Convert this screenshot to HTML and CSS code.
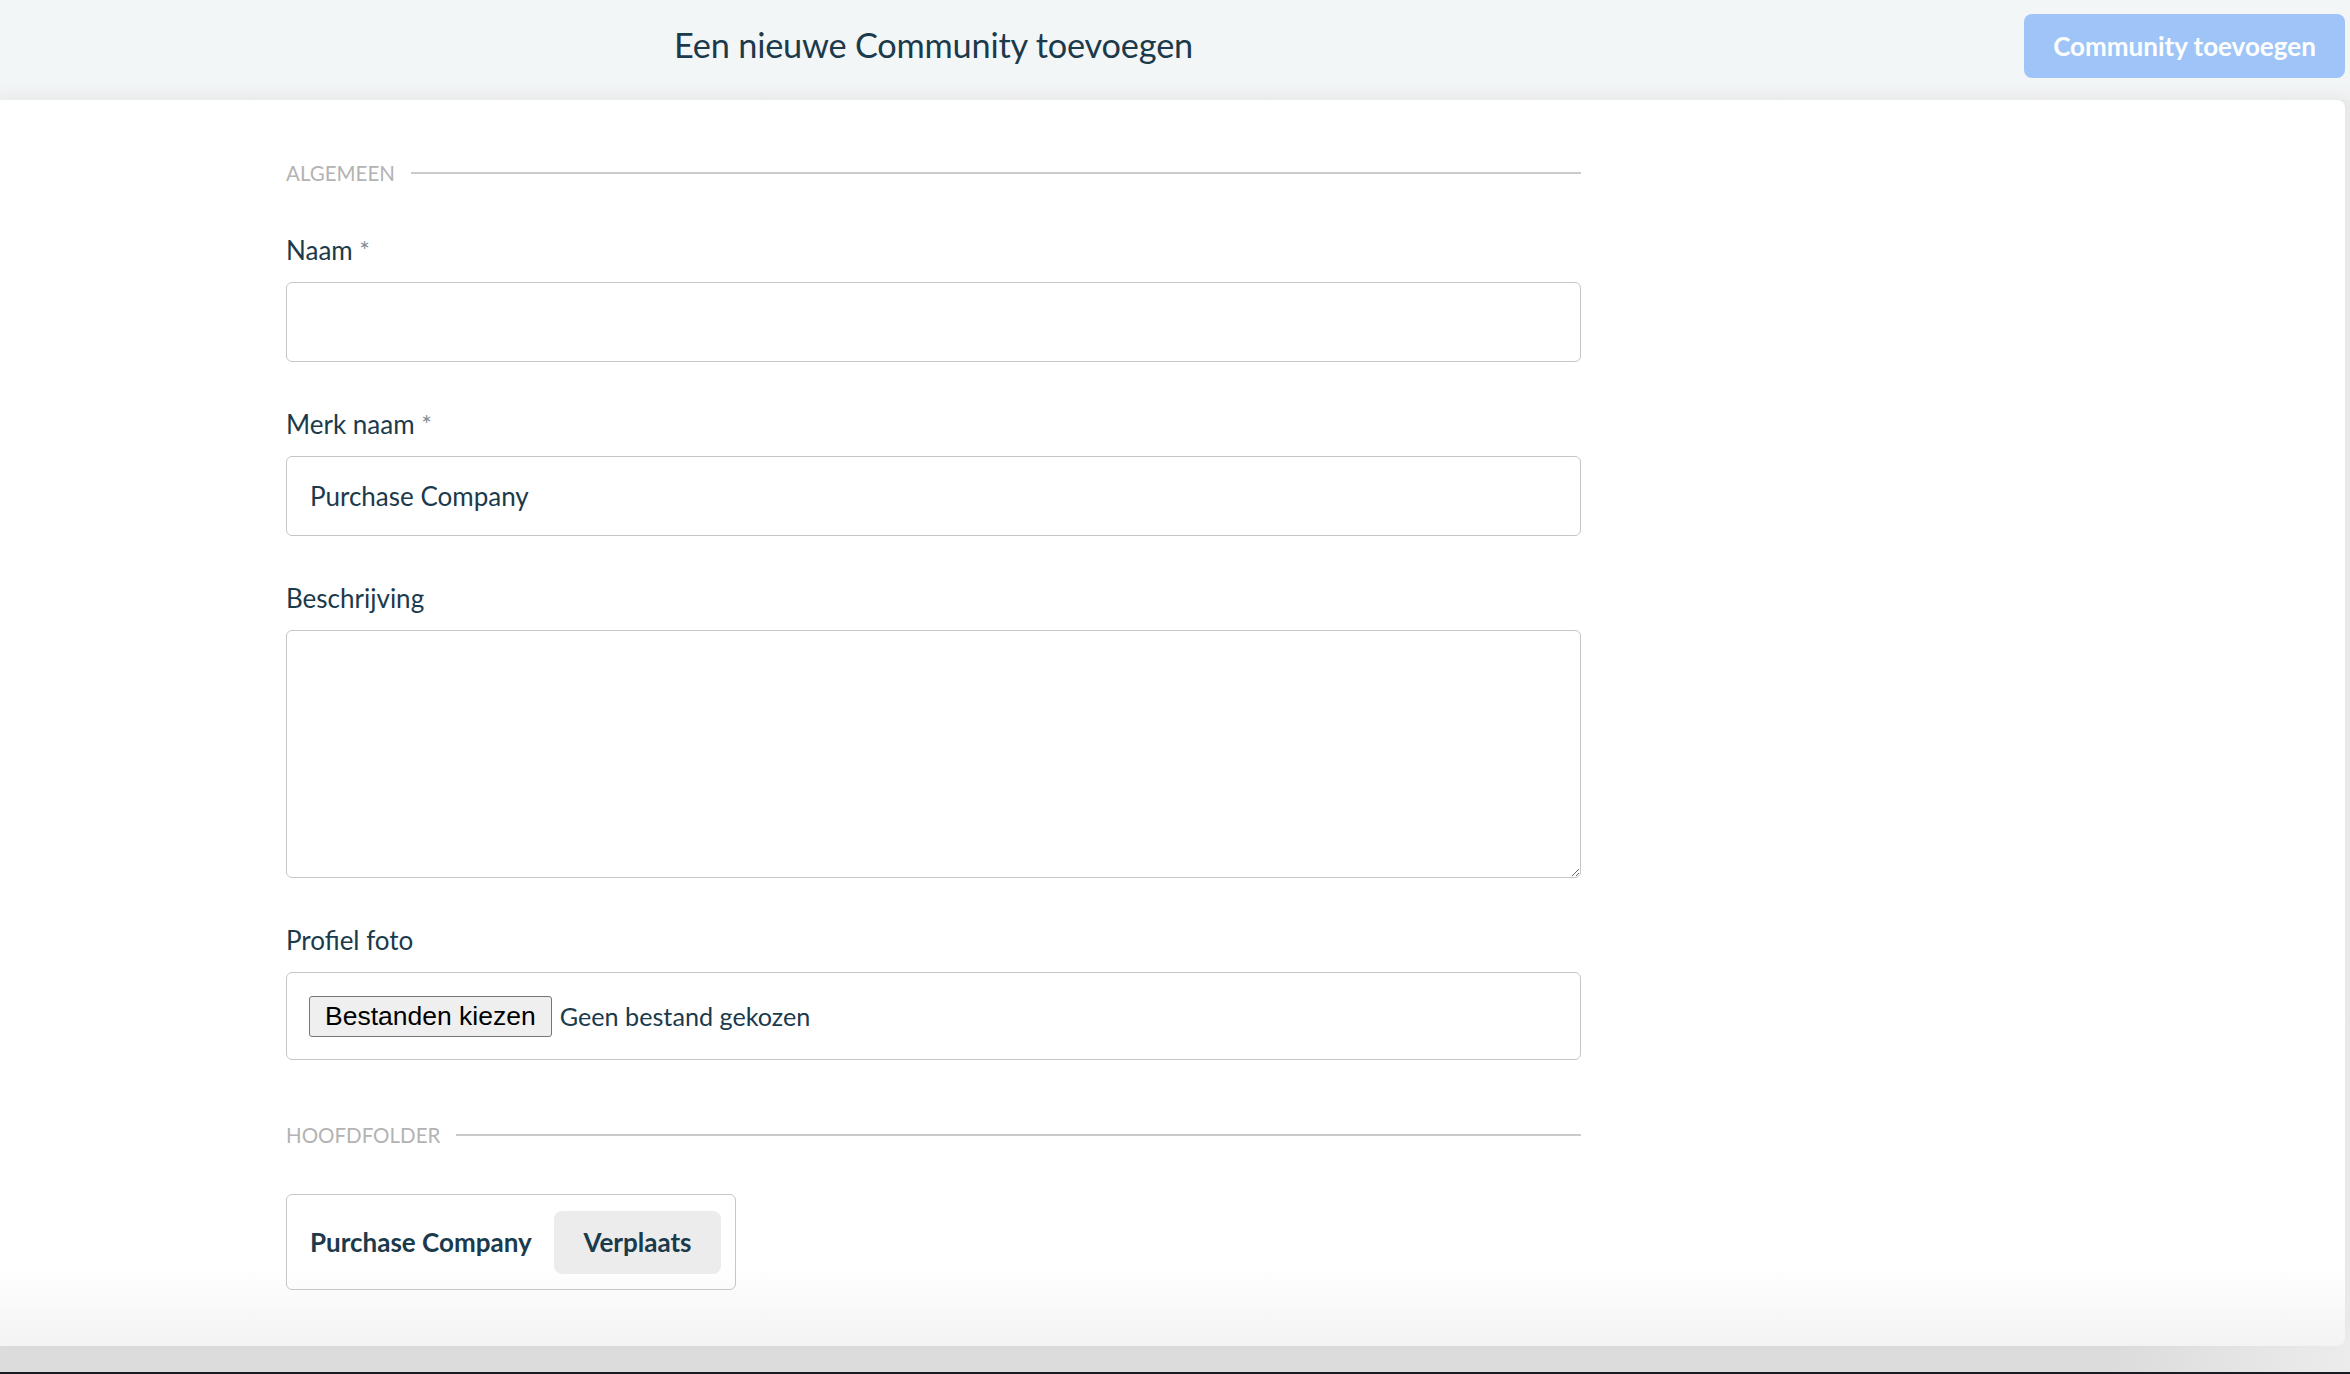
FILE: index.html
```html
<!DOCTYPE html>
<html lang="nl">
<head>
<meta charset="utf-8">
<title>Een nieuwe Community toevoegen</title>
<link rel="stylesheet" href="styles.css">
</head>
<body>
<div class="page">
  <header class="topbar">
    <div class="title-wrap"><h1 class="title">Een nieuwe Community toevoegen</h1></div>
    <button class="btn-primary" type="button">Community toevoegen</button>
  </header>
  <main class="card">
    <form class="form">
      <div class="section-head"><span class="section-label">Algemeen</span><span class="rule"></span></div>

      <div class="field">
        <label class="label" for="naam">Naam <span class="req">*</span></label>
        <input class="input" id="naam" type="text">
      </div>

      <div class="field">
        <label class="label" for="merk">Merk naam <span class="req">*</span></label>
        <input class="input" id="merk" type="text" value="Purchase Company">
      </div>

      <div class="field">
        <label class="label" for="besch">Beschrijving</label>
        <textarea class="textarea" id="besch"></textarea>
      </div>

      <div class="field">
        <label class="label">Profiel foto</label>
        <div class="file-box">
          <button class="file-btn" type="button">Bestanden kiezen</button>
          <span class="file-name">Geen bestand gekozen</span>
        </div>
      </div>

      <div class="section-head section-head--folder"><span class="section-label">Hoofdfolder</span><span class="rule"></span></div>

      <div class="folder-box">
        <span class="folder-name">Purchase Company</span>
        <button class="btn-move" type="button">Verplaats</button>
      </div>
    </form>
  </main>
  <div class="bottom-band"></div>
  <div class="footer-strip"></div>
</div>
</body>
</html>
```

FILE: styles.css
```css
* { box-sizing: border-box; }

body {
  margin: 0;
  font-family: Lato, "Noto Sans", sans-serif;
  color: #1b3a4b;
}

.page {
  height: 1374px;
  display: flex;
  flex-direction: column;
  overflow: hidden;
  background: linear-gradient(to right, #dcdcdc 0%, #dcdcdc 90%, #ececec 100%);
}

.topbar {
  height: 100px;
  flex: none;
  display: flex;
  align-items: flex-start;
  padding-top: 14px;
  background: linear-gradient(to bottom, #f3f6f7 0%, #f3f6f7 80%, #eef0f1 100%);
}

.title-wrap {
  margin-left: 286px;
  width: 1295px;
  text-align: center;
}

.title {
  margin: 0;
  font-size: 34.3px;
  line-height: 62px;
  font-weight: 400;
  color: #1b3a4b;
  letter-spacing: -0.2px;
}

.btn-primary {
  margin-left: auto;
  margin-right: 5px;
  width: 321px;
  height: 64px;
  border: 0;
  border-radius: 8px;
  background: #9fc5f8;
  color: #ffffff;
  font-family: Lato, sans-serif;
  font-size: 26px;
  font-weight: 700;
}

.card {
  flex: 1;
  margin-right: 5px;
  border-radius: 0 8px 8px 0;
  background: linear-gradient(to bottom, #ffffff 0%, #ffffff calc(100% - 80px), #f3f3f3 100%);
  box-shadow: 0 -4px 14px rgba(0, 0, 0, 0.03);
  padding: 58px 0 0 286px;
}

.form {
  width: 1295px;
  display: flex;
  flex-direction: column;
}

.section-head {
  display: flex;
  align-items: center;
  gap: 16px;
  height: 30px;
}

.section-head--folder {
  margin-top: 60px;
}

.section-label {
  font-size: 20.5px;
  text-transform: uppercase;
  color: #b3b3b3;
}

.rule {
  flex: 1;
  height: 2px;
  background: #cacaca;
}

.field {
  display: flex;
  flex-direction: column;
  margin-top: 44px;
}

.label {
  font-size: 26px;
  line-height: 36px;
  margin-bottom: 14px;
  color: #1b3a4b;
}

.req {
  color: #7d8c96;
  font-size: 25px;
}

.input {
  height: 80px;
  border: 1px solid #c6c6c6;
  border-radius: 6px;
  padding: 0 23px;
  font-family: Lato, sans-serif;
  font-size: 26px;
  color: #1b3a4b;
  background: #fff;
  outline: none;
}

.textarea {
  height: 248px;
  border: 1px solid #c6c6c6;
  border-radius: 6px;
  padding: 16px 23px;
  font-family: Lato, sans-serif;
  font-size: 26px;
  color: #1b3a4b;
  background: #fff;
  resize: vertical;
  outline: none;
}

.file-box {
  height: 88px;
  border: 1px solid #c6c6c6;
  border-radius: 6px;
  padding: 0 22px;
  display: flex;
  align-items: center;
  gap: 8px;
}

.file-btn {
  height: 41px;
  padding: 0 15px;
  border: 1px solid #767676;
  border-radius: 3px;
  background: #efefef;
  color: #000;
  font-family: "Liberation Sans", Arial, sans-serif;
  font-size: 26.5px;
}

.file-name {
  font-size: 25.2px;
  color: #1b3a4b;
}

.folder-box {
  margin-top: 44px;
  width: 450px;
  height: 96px;
  border: 1px solid #c6c6c6;
  border-radius: 6px;
  padding: 0 14px 0 23px;
  display: flex;
  align-items: center;
  justify-content: space-between;
}

.folder-name {
  font-size: 26px;
  font-weight: 700;
  color: #1b3a4b;
}

.btn-move {
  width: 167px;
  height: 63px;
  border: 0;
  border-radius: 8px;
  background: #ececec;
  color: #1b3a4b;
  font-family: Lato, sans-serif;
  font-size: 26px;
  font-weight: 700;
}

.bottom-band {
  height: 26px;
  flex: none;
}

.footer-strip {
  height: 2px;
  flex: none;
  background: #161b24;
}
```
